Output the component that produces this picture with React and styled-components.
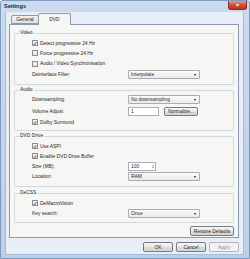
import React from 'react';
import styled, { createGlobalStyle } from 'styled-components';

const GlobalStyle = createGlobalStyle`
  html, body {
    margin: 0;
    padding: 0;
    background: #ffffff;
  }
  body {
    font-family: "Liberation Sans", Arial, sans-serif;
    font-size: 4.9px;
    color: #1e1e1e;
  }
`;

const Window = styled.div`
  width: 250px;
  height: 259px;
  box-sizing: border-box;
  display: flex;
  flex-direction: column;
  background: linear-gradient(#cbdaee, #bdd0e8);
  border: 1px solid #7e9abd;
  border-radius: 3px 3px 0 0;
`;

const TitleBar = styled.div`
  height: 11px;
  display: flex;
  justify-content: space-between;
  padding: 0 2px 0 3px;
`;

const Title = styled.span`
  font-weight: bold;
  font-size: 5.6px;
  line-height: 11px;
  color: #1b2b42;
`;

const CloseButton = styled.div`
  width: 19px;
  height: 9px;
  box-sizing: border-box;
  display: flex;
  align-items: center;
  justify-content: center;
  border: 1px solid #8b2b21;
  border-top: none;
  border-radius: 0 0 3px 3px;
  background: linear-gradient(#ea9a88, #d04834 55%, #bf3522);
  color: #ffffff;
  font-size: 6px;
  font-weight: bold;
  line-height: 1;
`;

const Client = styled.div`
  flex: 1;
  display: flex;
  flex-direction: column;
  margin: 0 5px 4px 4px;
  padding: 1px 4px 2px 3px;
  background: #e7eef8;
  border: 1px solid #a7bbd6;
  border-top: none;
`;

const TabStrip = styled.div`
  display: flex;
  align-items: flex-end;
  height: 11px;
  padding-left: 2px;
`;

const Tab = styled.div`
  box-sizing: border-box;
  height: ${p => (p.$active ? '12px' : '9px')};
  width: ${p => p.$w}px;
  margin-bottom: ${p => (p.$active ? '-1px' : '0')};
  margin-left: ${p => (p.$active ? '-1px' : '0')};
  display: flex;
  align-items: center;
  justify-content: center;
  border: 1px solid #8c9bb0;
  border-bottom: ${p => (p.$active ? 'none' : '1px solid #8c9bb0')};
  border-radius: 2px 2px 0 0;
  background: ${p => (p.$active ? '#f6f6f4' : 'linear-gradient(#f2f2f2, #dcdfe3)')};
  position: relative;
  z-index: ${p => (p.$active ? 2 : 1)};
`;

const TabPage = styled.div`
  display: flex;
  flex-direction: column;
  padding: 5px 4px 1px 4px;
  border: 1px solid #8c9bb0;
  background: #f6f6f4;
`;

const Group = styled.fieldset`
  margin: ${p => p.$top || 0}px 0 0 0;
  padding: ${p => p.$pt}px 4px ${p => p.$pb}px 4px;
  border: 1px solid #d3d8dd;
  border-radius: 2px;
  min-width: 0;
`;

const Legend = styled.legend`
  padding: 0 1px;
  font-size: 4.9px;
  line-height: 6px;
  color: #1e1e1e;
`;

const GroupBody = styled.div`
  padding-left: 13px;
`;

const Row = styled.div`
  display: grid;
  grid-template-columns: 96px 1fr;
  align-items: center;
  height: ${p => p.$h}px;
`;

const Label = styled.span`
  white-space: nowrap;
`;

const CheckRow = styled.label`
  display: flex;
  align-items: center;
  gap: 2px;
  white-space: nowrap;
`;

const Box = styled.span`
  width: 6px;
  height: 6px;
  box-sizing: border-box;
  border: 1px solid #8f8f8f;
  background: linear-gradient(#f4f4f4, #dedede);
  display: flex;
  align-items: center;
  justify-content: center;
`;

const Select = styled.div`
  width: 72px;
  height: 9px;
  box-sizing: border-box;
  display: flex;
  align-items: center;
  justify-content: space-between;
  padding: 0 3px 0 2px;
  border: 1px solid #a7adb5;
  border-radius: 1px;
  background: linear-gradient(#fbfbfb, #eaeaea);
`;

const Arrow = styled.span`
  width: 0;
  height: 0;
  border-left: 1.5px solid transparent;
  border-right: 1.5px solid transparent;
  border-top: 2px solid #1a1a1a;
`;

const Controls = styled.div`
  display: flex;
  align-items: center;
  gap: 5px;
`;

const TextBox = styled.div`
  width: ${p => p.$w}px;
  height: 9px;
  box-sizing: border-box;
  display: flex;
  align-items: center;
  justify-content: space-between;
  padding: 0 1px 0 2px;
  border: 1px solid #abadb3;
  background: #ffffff;
`;

const Spin = styled.div`
  display: flex;
  flex-direction: column;
  gap: 1px;
`;

const SpinArrow = styled.span`
  width: 0;
  height: 0;
  border-left: 1.5px solid transparent;
  border-right: 1.5px solid transparent;
  ${p => (p.$up ? 'border-bottom: 1.5px solid #4a5a70;' : 'border-top: 1.5px solid #4a5a70;')}
`;

const Button = styled.div`
  width: ${p => p.$w}px;
  height: ${p => p.$h || 10}px;
  box-sizing: border-box;
  display: flex;
  align-items: center;
  justify-content: center;
  white-space: nowrap;
  border: 1px solid ${p => (p.$disabled ? '#b2b6ba' : '#7a7a7a')};
  border-radius: 2px;
  background: ${p => (p.$disabled ? '#f2f2f2' : 'linear-gradient(#f6f6f6, #e8e8e8 50%, #dcdcdc 51%, #d4d4d4)')};
  color: ${p => (p.$disabled ? '#8c8c8c' : '#1e1e1e')};
`;

const RestoreRow = styled.div`
  display: flex;
  justify-content: flex-end;
  margin-top: 3px;
`;

const Footer = styled.div`
  display: flex;
  justify-content: flex-end;
  gap: 3px;
  margin-top: 4px;
`;

function Check({ checked, children }) {
  return (
    <CheckRow>
      <Box>
        {checked && (
          <svg width="5" height="5" viewBox="0 0 10 10">
            <path d="M2 5.5 L4.2 8 L8.5 1.5" fill="none" stroke="#253f7a" strokeWidth="1.8" />
          </svg>
        )}
      </Box>
      {children}
    </CheckRow>
  );
}

function Dropdown({ value }) {
  return (
    <Select>
      <span>{value}</span>
      <Arrow />
    </Select>
  );
}

export default function App() {
  return (
    <>
      <GlobalStyle />
      <Window>
        <TitleBar>
          <Title>Settings</Title>
          <CloseButton>×</CloseButton>
        </TitleBar>
        <Client>
          <TabStrip>
            <Tab $w={28}>General</Tab>
            <Tab $w={33} $active>DVD</Tab>
          </TabStrip>
          <TabPage>
            <Group $pt={2} $pb={4}>
              <Legend>Video</Legend>
              <GroupBody>
                <Row $h={10}><Check checked>Detect progressive 24 Hz</Check></Row>
                <Row $h={10}><Check>Force progressive 24 Hz</Check></Row>
                <Row $h={11}><Check>Audio / Video Synchronisation</Check></Row>
                <Row $h={11}>
                  <Label>Deinterlace Filter:</Label>
                  <Dropdown value="Interpolate" />
                </Row>
              </GroupBody>
            </Group>

            <Group $top={2} $pt={1} $pb={3}>
              <Legend>Audio</Legend>
              <GroupBody>
                <Row $h={11}>
                  <Label>Downsampling:</Label>
                  <Dropdown value="No downsampling" />
                </Row>
                <Row $h={12}>
                  <Label>Volume Adjust</Label>
                  <Controls>
                    <TextBox $w={31}>1</TextBox>
                    <Button $w={34} $h={9}>Normalize...</Button>
                  </Controls>
                </Row>
                <Row $h={10}><Check checked>Dolby Surround</Check></Row>
              </GroupBody>
            </Group>

            <Group $top={2} $pt={2} $pb={4}>
              <Legend>DVD Drive</Legend>
              <GroupBody>
                <Row $h={10}><Check checked>Use ASPI</Check></Row>
                <Row $h={10}><Check checked>Enable DVD Drive Buffer</Check></Row>
                <Row $h={10}>
                  <Label>Size (MB):</Label>
                  <TextBox $w={28}>
                    <span>100</span>
                    <Spin>
                      <SpinArrow $up />
                      <SpinArrow />
                    </Spin>
                  </TextBox>
                </Row>
                <Row $h={11}>
                  <Label>Location:</Label>
                  <Dropdown value="RAM" />
                </Row>
              </GroupBody>
            </Group>

            <Group $top={3} $pt={2} $pb={3}>
              <Legend>DeCSS</Legend>
              <GroupBody>
                <Row $h={10}><Check checked>DeMacroVision</Check></Row>
                <Row $h={11}>
                  <Label>Key search:</Label>
                  <Dropdown value="Once" />
                </Row>
              </GroupBody>
            </Group>

            <RestoreRow>
              <Button $w={44}>Restore Defaults</Button>
            </RestoreRow>
          </TabPage>
          <Footer>
            <Button $w={30}>OK</Button>
            <Button $w={30}>Cancel</Button>
            <Button $w={30} $disabled>Apply</Button>
          </Footer>
        </Client>
      </Window>
    </>
  );
}
